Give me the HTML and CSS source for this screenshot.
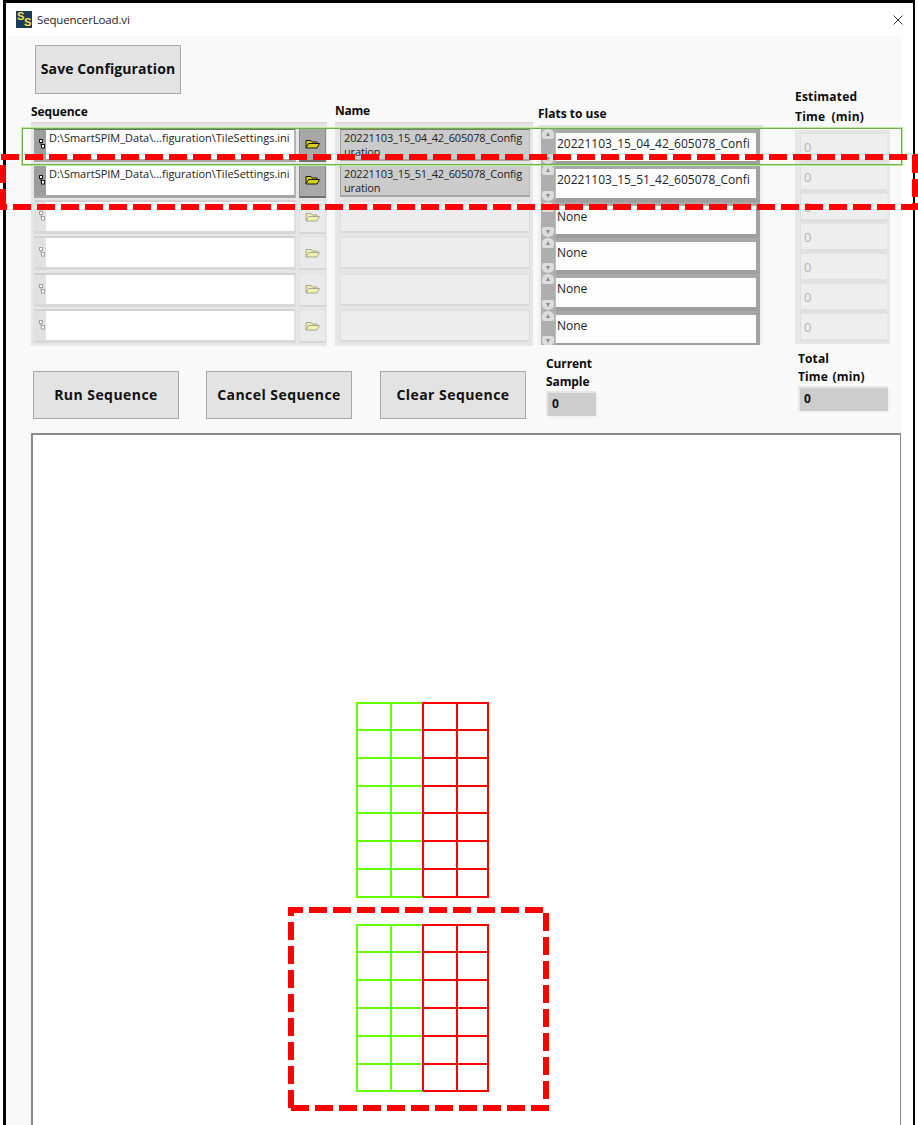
FILE: index.html
```html
<!DOCTYPE html>
<html lang="en">
<head>
<meta charset="utf-8">
<title>SequencerLoad.vi</title>
<link rel="stylesheet" href="styles.css">
</head>
<body>
<svg width="0" height="0" class="defs" aria-hidden="true">
  <symbol id="folder" viewBox="0 0 15 10">
    <path d="M1 9V1.500h5l1 1.500h5v1.500" fill="currentColor" stroke="var(--ink)" stroke-width="1"/>
    <path d="M1 9 3.500 4.500H14.500L12 9Z" fill="currentColor" stroke="var(--ink)" stroke-width="1"/>
  </symbol>
  <symbol id="pathi" viewBox="0 0 6 10">
    <path d="M2 3.500V6.500H4" fill="none" stroke="var(--ink)" stroke-width="1"/>
    <rect x=".5" y=".5" width="3" height="3" fill="#fff" stroke="var(--ink)"/>
    <rect x="2.500" y="5.500" width="3" height="3.500" fill="#fff" stroke="var(--ink)"/>
  </symbol>
</svg>
<div class="frame">
  <header class="titlebar">
    <span class="logo"><span class="s1">S</span><span class="s2">S</span></span>
    <span class="title">SequencerLoad.vi</span>
    <svg class="close" viewBox="0 0 10 10"><path d="M.5.500l9 9M9.500.500l-9 9" stroke="#333" fill="none"/></svg>
  </header>
  <main class="panel">
    <section class="columns">
      <div class="col col-seq">
        <button class="btn btn-save">Save Configuration</button>
        <div class="label label-seq">Sequence</div>
        <div class="list seq-list">
          <div class="seq-row on"><div class="field"><span class="strip"><svg class="pi"><use href="#pathi"/></svg></span><span class="path">D:\SmartSPIM_Data\...figuration\TileSettings.ini</span></div><span class="browse"><svg class="fo"><use href="#folder"/></svg></span></div>
          <div class="seq-row on"><div class="field"><span class="strip"><svg class="pi"><use href="#pathi"/></svg></span><span class="path">D:\SmartSPIM_Data\...figuration\TileSettings.ini</span></div><span class="browse"><svg class="fo"><use href="#folder"/></svg></span></div>
          <div class="seq-row"><div class="field"><span class="strip"><svg class="pi"><use href="#pathi"/></svg></span><span class="path"></span></div><span class="browse"><svg class="fo"><use href="#folder"/></svg></span></div>
          <div class="seq-row"><div class="field"><span class="strip"><svg class="pi"><use href="#pathi"/></svg></span><span class="path"></span></div><span class="browse"><svg class="fo"><use href="#folder"/></svg></span></div>
          <div class="seq-row"><div class="field"><span class="strip"><svg class="pi"><use href="#pathi"/></svg></span><span class="path"></span></div><span class="browse"><svg class="fo"><use href="#folder"/></svg></span></div>
          <div class="seq-row"><div class="field"><span class="strip"><svg class="pi"><use href="#pathi"/></svg></span><span class="path"></span></div><span class="browse"><svg class="fo"><use href="#folder"/></svg></span></div>
        </div>
      </div>
      <div class="col col-name">
        <div class="label label-name">Name</div>
        <div class="list name-list">
          <div class="name-row on"><div class="name-cell">20221103_15_04_42_605078_Configuration</div></div>
          <div class="name-row on"><div class="name-cell">20221103_15_51_42_605078_Configuration</div></div>
          <div class="name-row"><div class="name-cell"></div></div>
          <div class="name-row"><div class="name-cell"></div></div>
          <div class="name-row"><div class="name-cell"></div></div>
          <div class="name-row"><div class="name-cell"></div></div>
        </div>
      </div>
      <div class="col col-flats">
        <div class="label label-flats">Flats to use</div>
        <div class="list flats-list">
          <div class="flat-row"><span class="spin"><i class="up"></i><i class="down"></i></span><div class="flat-val">20221103_15_04_42_605078_Confi</div></div>
          <div class="flat-row"><span class="spin"><i class="up"></i><i class="down"></i></span><div class="flat-val">20221103_15_51_42_605078_Confi</div></div>
          <div class="flat-row"><span class="spin"><i class="up"></i><i class="down"></i></span><div class="flat-val">None</div></div>
          <div class="flat-row"><span class="spin"><i class="up"></i><i class="down"></i></span><div class="flat-val">None</div></div>
          <div class="flat-row"><span class="spin"><i class="up"></i><i class="down"></i></span><div class="flat-val">None</div></div>
          <div class="flat-row"><span class="spin"><i class="up"></i><i class="down"></i></span><div class="flat-val">None</div></div>
        </div>
      </div>
      <div class="col col-est">
        <div class="label label-est">Estimated<br>Time (min)</div>
        <div class="list est-list">
          <div class="est-cell">0</div>
          <div class="est-cell">0</div>
          <div class="est-cell">0</div>
          <div class="est-cell">0</div>
          <div class="est-cell">0</div>
          <div class="est-cell">0</div>
          <div class="est-cell">0</div>
        </div>
      </div>
    </section>
    <section class="actions">
      <button class="btn btn-act">Run Sequence</button>
      <button class="btn btn-act">Cancel Sequence</button>
      <button class="btn btn-act">Clear Sequence</button>
      <div class="stat stat-current">
        <div class="label">Current<br>Sample</div>
        <div class="readout">0</div>
      </div>
      <div class="stat stat-total">
        <div class="label label-time">Total<br>Time (min)</div>
        <div class="readout">0</div>
      </div>
    </section>
    <section class="plot">
      <svg class="tiles tiles-a" width="135" height="197" viewBox="355 701 135 197">
        <g class="gr">
          <path d="M357 702V897M390.500 702V897M423 702V897"/>
          <path d="M356 702.500H423M356 730H423M356 758H423M356 786H423M356 813H423M356 841H423M356 869H423M356 896.500H423"/>
        </g>
        <g class="rd">
          <path d="M423 702V897M456.500 702V897M488 702V897"/>
          <path d="M423 702.500H489M423 730H489M423 758H489M423 786H489M423 813H489M423 841H489M423 869H489M423 896.500H489"/>
        </g>
      </svg>
      <svg class="tiles tiles-b" width="135" height="169" viewBox="355 923 135 169">
        <g class="gr">
          <path d="M357 924V1091M390.500 924V1091M423 924V1091"/>
          <path d="M356 924.500H423M356 951.500H423M356 979.500H423M356 1007.500H423M356 1035.500H423M356 1063.500H423M356 1090.500H423"/>
        </g>
        <g class="rd">
          <path d="M423 924V1091M456.500 924V1091M488 924V1091"/>
          <path d="M423 924.500H489M423 951.500H489M423 979.500H489M423 1007.500H489M423 1035.500H489M423 1063.500H489M423 1090.500H489"/>
        </g>
      </svg>
    </section>
  </main>
</div>
<div class="green-box"></div>
<svg class="notes" width="918" height="1125" viewBox="0 0 918 1125" aria-hidden="true">
  <path class="dash" d="M1 157H918"/>
  <path class="dash" d="M-11 207H918"/>
  <path class="dash" d="M3 165V207"/>
  <path class="dash" d="M915 155V210"/>
  <path class="dash" d="M288 910H303"/>
  <path class="dash" d="M309 910H543"/>
  <path class="dash" d="M291 907V916"/>
  <path class="dash" d="M291 922V1108"/>
  <path class="dash" d="M546 913V1099"/>
  <path class="dash" d="M291 1108H549"/>
</svg>
</body>
</html>
```
FILE: styles.css
```css
* { box-sizing: border-box; }
html, body { margin: 0; padding: 0; }
body {
  width: 918px;
  height: 1125px;
  overflow: hidden;
  position: relative;
  background: #fff;
  color: #111;
  font-family: "Open Sans", "Noto Sans", sans-serif;
}
.defs { position: absolute; }

.frame {
  margin-left: 3px;
  width: 912px;
  height: 1125px;
  border-top: 3px solid #000;
  border-left: 3px solid #000;
  border-right: 2px solid #000;
  background: #fff;
  display: flex;
  flex-direction: column;
}

.titlebar {
  height: 33px;
  flex: none;
  display: flex;
  align-items: center;
  padding: 0 10px;
}
.logo {
  width: 16px;
  height: 17px;
  margin-bottom: 1px;
  background: #1d3a57;
  color: #f4e34c;
  font: bold 11px/1 "Liberation Sans", sans-serif;
  position: relative;
  flex: none;
}
.s1 { position: absolute; left: 1px; top: 0; }
.s2 { position: absolute; left: 8px; top: 6px; }
.title {
  margin-left: 5px;
  font-size: 11.500px;
  letter-spacing: -.15px;
  color: #222;
}
.close { width: 10px; height: 10px; margin-left: auto; }

.panel {
  flex: 1;
  margin: 0 12px 0 1px;
  background: #f9f9f9;
  padding-left: 24px;
  display: flex;
  flex-direction: column;
  min-height: 0;
}

.label {
  font: 700 12px/18px "Open Sans", sans-serif;
  letter-spacing: -.1px;
  color: #0c0c0c;
}

.btn {
  font: 700 14px/1 "Open Sans", sans-serif;
  color: #111;
  background: #e3e3e3;
  border: 1px solid #a8a8a8;
  padding: 0 0 2px;
}

.columns { display: flex; align-items: flex-start; height: 310px; flex: none; }
.col { flex: none; }
.col-seq { width: 296px; padding-top: 9px; }
.btn-save { display: block; width: 146px; height: 49px; margin-left: 4px; letter-spacing: .1px; }
.label-seq { margin-top: 9px; height: 19px; }
.col-name { width: 198px; margin-left: 8px; padding-top: 66px; }
.label-name { height: 20px; letter-spacing: -.3px; }
.col-flats { width: 225px; margin-left: 5px; padding-top: 69px; }
.label-flats { height: 20px; letter-spacing: 0; }
.col-est { width: 95px; margin-left: 32px; padding-top: 51px; }
.label-est { line-height: 20px; height: 43px; letter-spacing: .2px; word-spacing: 3px; }
.label-time { word-spacing: 1.500px; letter-spacing: .1px; }

.list { background: #e6e6e6; box-shadow: inset 0 2px #dcdcdc; }

.seq-list { height: 224px; padding: 5.500px 1px 0 3px; }
.seq-row { height: 36.330px; display: flex; gap: 3px; }
.field {
  width: 262px;
  height: 34px;
  display: flex;
  background: #fff;
  border-top: 2.500px solid #d2d2d2;
  border-bottom: 3px solid #d8d8d8;
  border-right: 2px solid #dedede;
}
.strip { width: 12px; flex: none; background: #e2e2e2; padding: 9px 0 0 5px; --ink: #a2a2a2; }
.pi { width: 6px; height: 10px; display: block; }
.path { font-size: 11px; line-height: 14px; white-space: nowrap; color: #222; padding: 1px 0 0 3px; }
.browse {
  width: 27px;
  height: 34px;
  background: #eaeaea;
  border: 1px solid #e0e0e0;
  border-bottom: 2px solid #d6d6d6;
  color: #f3f0a8;
  --ink: #a6a695;
  display: flex;
  align-items: center;
  justify-content: center;
}
.fo { width: 15px; height: 10px; }
.seq-row.on .field { border-top-color: #6f6f6f; border-bottom-color: #a5a5a5; border-right-color: #b5b5b5; }
.seq-row.on .strip { background: #9d9d9d; --ink: #151515; }
.seq-row.on .browse {
  background: #a8a8a8;
  border-color: #8a8a8a;
  border-bottom-color: #707070;
  color: #d7cf1a;
  --ink: #191919;
}

.name-list { height: 224px; padding: 5.500px 3px 0 5px; }
.name-row { height: 36.330px; }
.name-cell {
  width: 190px;
  height: 33px;
  background: #ededed;
  border-top: 2px solid #e0e0e0;
  border-left: 1px solid #e0e0e0;
  border-bottom: 2px solid #dadada;
  border-right: 1px solid #dadada;
  font-size: 11px;
  letter-spacing: -.15px;
  line-height: 14px;
  padding: 1px 3px 0 3px;
  overflow-wrap: anywhere;
  color: #222;
  overflow: hidden;
}
.name-row.on .name-cell { background: #cbcbcb; border-top-color: #7b7b7b; border-left-color: #a0a0a0; border-bottom-color: #a4a4a4; border-right-color: #bbb; }

.flats-list { height: 220px; padding: 4px 3px 0 3px; background: #f0f0f0; box-shadow: inset 0 3px #dedede; overflow: hidden; }
.flat-row { height: 36.330px; display: flex; }
.spin {
  width: 14px;
  flex: none;
  background: #aeaeae;
  position: relative;
}
.spin i { position: absolute; left: 1px; width: 12px; height: 10px; background: #dcdcdc; border-radius: 50% 50% 2px 2px; }
.spin i::after { content: ""; position: absolute; left: 4px; top: 3px; border: 2px solid transparent; }
.spin .up { top: 0; }
.spin .up::after { border-top: 0; border-bottom: 4px solid #8a8a8a; }
.spin .down { bottom: 1px; border-radius: 2px 2px 50% 50%; }
.spin .down::after { border-bottom: 0; border-top: 4px solid #8a8a8a; }
.flat-val {
  width: 206px;
  height: 36.330px;
  background: #fdfdfd;
  border-top: 4px solid #a8a8a8;
  border-bottom: 4.330px solid #9e9e9e;
  border-right: 4px solid #a2a2a2;
  border-left: 1px solid #bdbdbd;
  font-size: 12px;
  line-height: 18px;
  padding: 2px 0 0 1px;
  white-space: nowrap;
  color: #222;
}

.est-list { height: 214px; padding: 2px 3px 0 5px; background: #e7e7e7; box-shadow: none; }
.est-cell {
  height: 30px;
  background: #eeeeee;
  border-top: 2px solid #e2e2e2;
  border-bottom: 3px solid #e0e0e0;
  border-left: 1px solid #dfdfdf;
  font-size: 13px;
  line-height: 26px;
  padding-left: 3px;
  color: #b4b4b4;
}

.actions { display: flex; align-items: flex-start; height: 87px; flex: none; }
.btn-act { width: 146px; height: 48px; margin-top: 25px; letter-spacing: .45px; padding: 0; }
.btn-act:nth-child(1) { margin-left: 2px; }
.btn-act:nth-child(2) { margin-left: 27px; }
.btn-act:nth-child(3) { margin-left: 28px; }
.stat-current { margin-left: 20px; padding-top: 9px; width: 50px; }
.stat-total { margin-left: 202px; padding-top: 4px; width: 90px; }
.readout {
  height: 25px;
  background: #cdcdcd;
  border-top: 2px solid #e6e6e6;
  border-left: 2px solid #e6e6e6;
  box-shadow: 2px 2px 0 #f2f2f2;
  font: 700 12px/22px "Open Sans", sans-serif;
  padding-left: 4px;
  color: #111;
}

.plot {
  flex: 1;
  width: 870px;
  background: #fff;
  border-top: 2px solid #8a8a8a;
  border-left: 2px solid #8a8a8a;
  border-right: 1px solid #8a8a8a;
  min-height: 0;
  display: flex;
  flex-direction: column;
  overflow: hidden;
}
.tiles { display: block; flex: none; margin-left: 322px; fill: none; stroke-width: 2; shape-rendering: crispEdges; }
.tiles-a { margin-top: 266px; }
.tiles-b { margin-top: 25px; }
.gr { stroke: #66ff00; }
.rd { stroke: #ff0000; }

.green-box {
  position: absolute;
  left: 22px;
  top: 127.500px;
  width: 880px;
  height: 37px;
  border: 1px solid #6fae4a;
  box-shadow: 0 0 0 1px #b9eb9e;
  pointer-events: none;
}
.notes { position: absolute; left: 0; top: 0; pointer-events: none; }
.dash { fill: none; stroke: #ff0000; stroke-width: 6; stroke-dasharray: 18 6; }
```
